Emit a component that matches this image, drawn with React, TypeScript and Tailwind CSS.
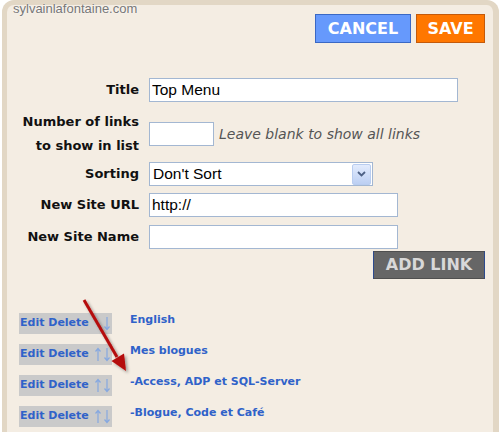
import React from 'react'

const label = "w-[132px] shrink-0 text-right text-[13px] font-bold text-[#111] leading-[24px]"
const field = "h-[24px] border border-[#a3b7d2] bg-white pl-[2px] text-[15.5px] text-black outline-none [font-family:'Liberation_Sans',Arial,sans-serif]"

function UpDown({ up }: { up: boolean }) {
  return (
    <div className="flex items-center gap-[3px] ml-[6px]">
      <svg width="6" height="15" viewBox="0 0 6 15" className={up ? '' : 'invisible'}>
        <path d="M3 1.5V14M0.5 4.5L3 1.5L5.5 4.5" stroke="#86a8e0" strokeWidth="1.2" fill="none" />
      </svg>
      <svg width="6" height="15" viewBox="0 0 6 15">
        <path d="M3 1V13.5M0.5 10.5L3 13.5L5.5 10.5" stroke="#86a8e0" strokeWidth="1.2" fill="none" />
      </svg>
    </div>
  )
}

const links = [
  { name: 'English', up: false },
  { name: 'Mes blogues', up: true },
  { name: '-Access, ADP et SQL-Server', up: true },
  { name: '-Blogue, Code et Café', up: true },
]

export default function App() {
  return (
    <div className="relative w-[500px] h-[432px] overflow-hidden bg-white [font-family:'DejaVu_Sans',Verdana,sans-serif]">
      <div className="ml-[2px] w-[497px] min-h-[450px] rounded-t-[12px] border-t-[5px] border-l-[5px] border-r-[6px] border-[#e2d7c5] bg-[#f4ede3]">
        {/* Top buttons */}
        <div className="flex justify-end gap-[5px] pt-[9px] pr-[8px]">
          <button className="w-[96px] h-[29px] border border-[#3a68c4] bg-[#6699fc] text-white text-[16px] font-bold">
            CANCEL
          </button>
          <button className="w-[69px] h-[29px] border border-[#c45a0a] bg-[#ff7700] text-white text-[16px] font-bold">
            SAVE
          </button>
        </div>

        {/* Form */}
        <div className="flex flex-col mt-[35px] pr-[8px]">
          <div className="flex items-center">
            <span className={label}>Title</span>
            <input className={field + " ml-[10px] w-[309px]"} defaultValue="Top Menu" />
          </div>

          <div className="flex items-center mt-[8px]">
            <span className={label}>Number of links<br />to show in list</span>
            <input className={field + " ml-[10px] w-[65px]"} defaultValue="" />
            <span className="ml-[5px] text-[14px] italic text-[#555]">Leave blank to show all links</span>
          </div>

          <div className="flex items-center mt-[4px]">
            <span className={label}>Sorting</span>
            <div className="ml-[10px] w-[224px] h-[24px] flex items-center border border-[#a3b7d2] bg-white">
              <span className="flex-1 pl-[3px] text-[15.5px] text-black [font-family:'Liberation_Sans',Arial,sans-serif]">Don't Sort</span>
              <div className="w-[19px] h-[21px] mr-[1px] flex items-center justify-center rounded-[2px] border border-[#b9cdf0] bg-gradient-to-b from-[#e3ecfd] to-[#bccff3]">
                <svg width="9" height="6" viewBox="0 0 9 6">
                  <path d="M1 1L4.5 4.5L8 1" stroke="#4d6185" strokeWidth="1.8" fill="none" />
                </svg>
              </div>
            </div>
          </div>

          <div className="flex items-center mt-[7px]">
            <span className={label}>New Site URL</span>
            <input className={field + " ml-[10px] w-[249px]"} defaultValue="http://" />
          </div>

          <div className="flex items-center mt-[8px]">
            <span className={label}>New Site Name</span>
            <input className={field + " ml-[10px] w-[249px]"} defaultValue="" />
          </div>

          <div className="flex justify-end mt-[2px]">
            <button className="w-[112px] h-[28px] border border-[#4f4f4f] border-x-[#2c4a8e] bg-[#666] text-[#d8d8d8] text-[16px] font-bold">
              ADD LINK
            </button>
          </div>
        </div>

        {/* Link list */}
        <div className="flex flex-col gap-[10px] mt-[34px] pl-[12px]">
          {links.map(l => (
            <div key={l.name} className="flex items-start">
              <div className="w-[93px] h-[21px] flex items-center pl-[1px] bg-[#cacaca]">
                <span className="text-[11px] font-bold text-[#2f62c9]">Edit Delete</span>
                <UpDown up={l.up} />
              </div>
              <span className="ml-[18px] -mt-[1px] text-[11px] font-bold text-[#2f62c9]">{l.name}</span>
            </div>
          ))}
        </div>
      </div>

      {/* Watermark */}
      <span className="absolute left-[13px] top-[1px] text-[13px] leading-[15px] text-[#777] [font-family:'Liberation_Sans',Arial,sans-serif] [text-shadow:0_0_2px_#fff]">
        sylvainlafontaine.com
      </span>

      {/* Red arrow */}
      <svg className="absolute left-0 top-0" width="500" height="432" viewBox="0 0 500 432">
        <defs>
          <filter id="sh" x="-50%" y="-50%" width="200%" height="200%">
            <feDropShadow dx="2" dy="2" stdDeviation="1.5" floodColor="#000" floodOpacity="0.35" />
          </filter>
        </defs>
        <g filter="url(#sh)">
          <line x1="84" y1="300" x2="117" y2="357" stroke="#b50a0a" strokeWidth="3" />
          <polygon points="126,371 111.5,361 124,353.5" fill="#b50a0a" />
        </g>
      </svg>
    </div>
  )
}
